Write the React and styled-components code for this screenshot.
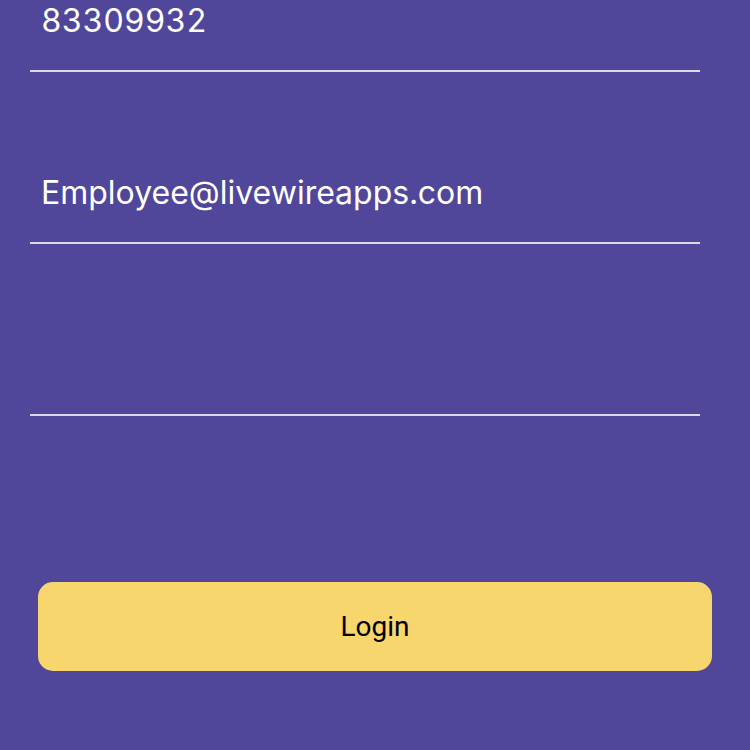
import React from "react";
import styled, { createGlobalStyle } from "styled-components";

const Global = createGlobalStyle`
  html, body { margin: 0; padding: 0; background: #50469a; }
  body { font-family: Inter, "Noto Sans", sans-serif; }
`;

const Screen = styled.div`
  width: 750px;
  height: 750px;
  overflow: hidden;
  background: #50469a;
  display: flex;
  flex-direction: column;
`;

const Form = styled.div`
  display: flex;
  flex-direction: column;
  margin-top: -100px;
  padding: 0 50px 0 30px;
`;

const Field = styled.div`
  border-bottom: 2px solid #dcd8e6;
  display: flex;
  align-items: flex-end;
  padding: 0 11px 29px;
  box-sizing: border-box;
  height: 172px;
`;

const Value = styled.span`
  color: #ffffff;
  font-size: 32px;
  line-height: 40px;
  font-weight: 400;
  font-variant-numeric: tabular-nums;
`;

const Actions = styled.div`
  padding: 166px 38px 0 38px;
`;

const Button = styled.button`
  width: 674px;
  height: 89px;
  border: none;
  border-radius: 15px;
  background: #f7d66e;
  color: #000;
  font-family: Roboto, "Noto Sans", sans-serif;
  font-size: 28px;
  display: flex;
  align-items: center;
  justify-content: center;
  padding: 0;
`;

const fields = ["83309932", "Employee@livewireapps.com", ""];

export default function App() {
  return (
    <Screen>
      <Global />
      <Form>
        {fields.map((f, i) => (
          <Field key={i}>
            <Value>{f}</Value>
          </Field>
        ))}
      </Form>
      <Actions>
        <Button>Login</Button>
      </Actions>
    </Screen>
  );
}
